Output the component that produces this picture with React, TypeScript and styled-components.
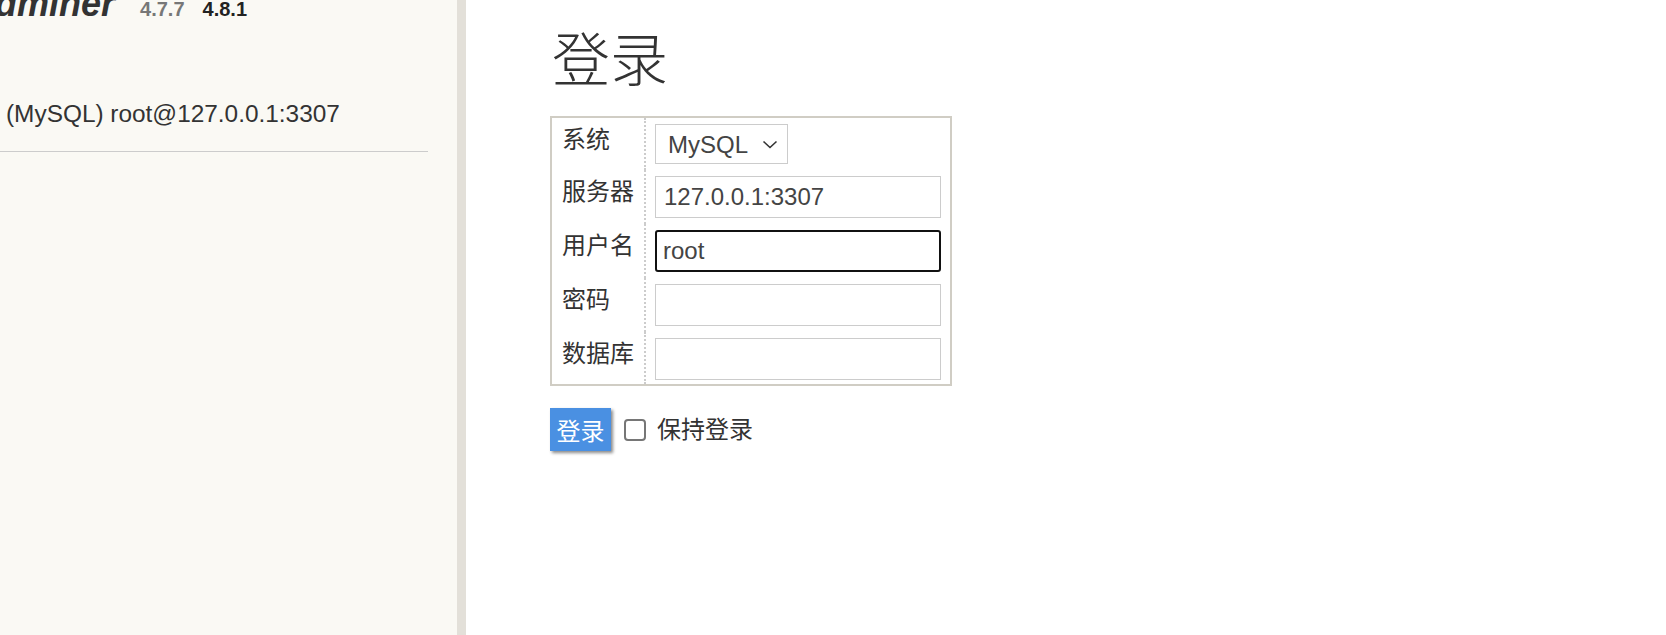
import React from "react";
import styled, { createGlobalStyle } from "styled-components";

const GlobalStyle = createGlobalStyle`
  html, body { margin: 0; padding: 0; background: #fff; }
  body {
    font-family: "Liberation Sans", Arial, "Noto Sans CJK SC", sans-serif;
    font-size: 24px;
    line-height: 1.25;
    color: #333;
    overflow: hidden;
  }
`;

const Page = styled.div`
  display: flex;
  height: 635px;
  width: 1666px;
`;

const Sidebar = styled.aside`
  width: 457px;
  flex: 0 0 457px;
  background: #faf9f4;
  border-right: 9px solid #e3e0d9;
  overflow: hidden;
`;

const Logo = styled.h1`
  display: flex;
  align-items: baseline;
  margin: -14px 0 0 -31px;
  font-size: 36px;
  line-height: 1;
  font-weight: bold;
  white-space: nowrap;
`;

const LogoName = styled.a`
  font-style: italic;
  color: #333;
  text-decoration: none;
  margin-right: 25px;
`;

const Version = styled.span<{ $current?: boolean }>`
  font-size: 20px;
  font-weight: bold;
  color: ${(p) => (p.$current ? "#222" : "#777")};
  margin-right: 18px;
`;

const Connection = styled.div`
  margin: 77px 0 0 6px;
  font-size: 24.4px;
  white-space: nowrap;
  color: #333;
`;

const Rule = styled.hr`
  width: 428px;
  margin: 21px 0 0 0;
  border: 0;
  border-top: 1px solid #ccc;
`;

const Main = styled.main`
  flex: 1;
  padding: 0 0 0 84px;
`;

const Title = styled.h2`
  margin: 23px 0 0 2px;
  font-family: "Noto Sans CJK SC", sans-serif;
  font-weight: 300;
  font-size: 58px;
  line-height: 66px;
  color: #333;
`;

const FormBox = styled.div`
  display: grid;
  grid-template-columns: 94px 304px;
  border: 2px solid #d0cdc4;
  width: 398px;
  margin-top: 27px;
`;

const Label = styled.div`
  border-right: 2px dotted #ccc;
  padding: 7px 0 0 10px;
  font-family: "Liberation Sans", "Noto Sans CJK SC", sans-serif;
  line-height: 30px;
  color: #333;
`;

const Field = styled.div<{ $last?: boolean }>`
  padding: 6px 9px ${(p) => (p.$last ? "4px" : "6px")} 9px;
  display: flex;
  align-items: flex-start;
`;

const TextInput = styled.input<{ $focused?: boolean }>`
  box-sizing: border-box;
  width: 286px;
  height: 42px;
  margin: 0;
  padding: 0 ${(p) => (p.$focused ? "6px" : "8px")};
  font-family: "Liberation Sans", Arial, sans-serif;
  font-size: 24px;
  color: #444;
  background: #fff;
  border: ${(p) => (p.$focused ? "2px solid #111" : "1px solid #ccc")};
  border-radius: ${(p) => (p.$focused ? "3px" : "0")};
  outline: none;
`;

const SelectWrap = styled.div`
  position: relative;
  width: 133px;
  height: 40px;
`;

const Select = styled.select`
  box-sizing: border-box;
  width: 133px;
  height: 40px;
  margin: 0;
  padding: 0 36px 0 12px;
  appearance: none;
  -webkit-appearance: none;
  font-family: "Liberation Sans", Arial, sans-serif;
  font-size: 24px;
  color: #444;
  background: #fff;
  border: 1px solid #ccc;
  border-radius: 0;
  outline: none;
`;

const Chevron = styled.svg`
  position: absolute;
  right: 10px;
  top: 16px;
  pointer-events: none;
`;

const Actions = styled.div`
  display: flex;
  align-items: center;
  margin-top: 22px;
`;

const Submit = styled.button`
  width: 61px;
  height: 43px;
  padding: 0;
  border: 0;
  background: #4a90e2;
  color: #fff;
  font-family: "Liberation Sans", "Noto Sans CJK SC", sans-serif;
  font-size: 24px;
  box-shadow: 2px 2px 3px #8a8a8a;
  cursor: pointer;
`;

const Remember = styled.label`
  display: flex;
  align-items: center;
  margin-left: 13px;
  color: #333;
  font-family: "Liberation Sans", "Noto Sans CJK SC", sans-serif;
`;

const Check = styled.span`
  box-sizing: border-box;
  width: 22px;
  height: 22px;
  border: 2px solid #767676;
  border-radius: 4px;
  background: #fff;
  margin-right: 11px;
`;

const rows: { label: string; value: string; focused?: boolean }[] = [
  { label: "服务器", value: "127.0.0.1:3307" },
  { label: "用户名", value: "root", focused: true },
  { label: "密码", value: "" },
  { label: "数据库", value: "" },
];

export default function App() {
  return (
    <>
      <GlobalStyle />
      <Page>
        <Sidebar>
          <Logo>
            <LogoName>Adminer</LogoName>
            <Version>4.7.7</Version>
            <Version $current>4.8.1</Version>
          </Logo>
          <Connection>(MySQL) root@127.0.0.1:3307</Connection>
          <Rule />
        </Sidebar>
        <Main>
          <Title>登录</Title>
          <FormBox>
            <Label>系统</Label>
            <Field>
              <SelectWrap>
                <Select defaultValue="server">
                  <option value="server">MySQL</option>
                </Select>
                <Chevron width="16" height="9" viewBox="0 0 16 9">
                  <path d="M1.5 1.5 L8 7.5 L14.5 1.5" fill="none" stroke="#333" strokeWidth="1.6" />
                </Chevron>
              </SelectWrap>
            </Field>
            {rows.map((r, i) => (
              <React.Fragment key={r.label}>
                <Label>{r.label}</Label>
                <Field $last={i === rows.length - 1}>
                  <TextInput $focused={r.focused} defaultValue={r.value} />
                </Field>
              </React.Fragment>
            ))}
          </FormBox>
          <Actions>
            <Submit>登录</Submit>
            <Remember>
              <Check />
              保持登录
            </Remember>
          </Actions>
        </Main>
      </Page>
    </>
  );
}
